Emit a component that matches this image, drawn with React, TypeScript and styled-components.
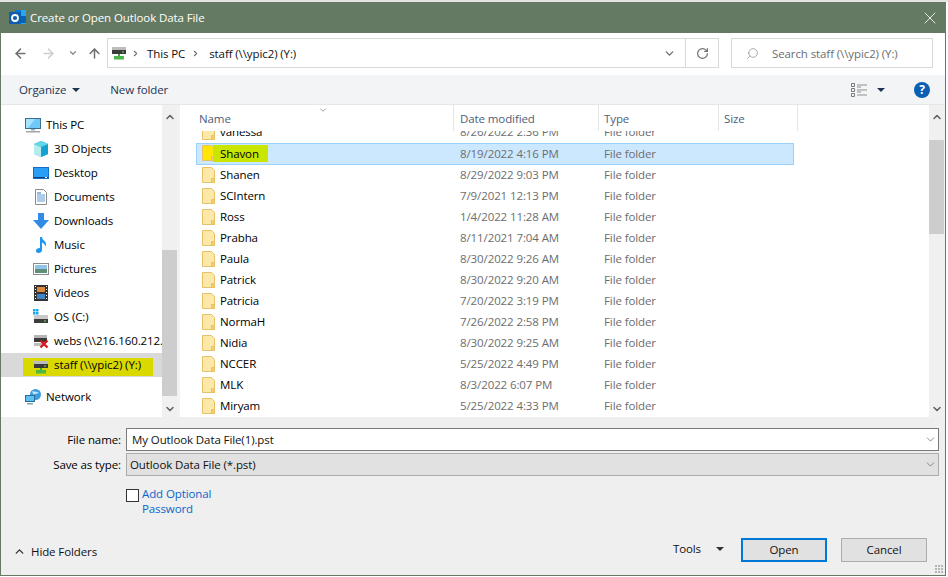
import styled, { createGlobalStyle } from "styled-components";
import { ArrowLeft, ArrowRight, ArrowUp, ChevronDown, ChevronRight, ChevronUp, RotateCw, Search, X } from "lucide-react";

const GlobalStyle = createGlobalStyle`
	html, body {
		margin: 0;
		padding: 0;
		background: #fff;
		font-family: "Open Sans", "Noto Sans", sans-serif;
		font-size: 11.5px;
		letter-spacing: -0.1px;
		color: #000;
		overflow: hidden;
	}
`;

const Page = styled.div`
	width: 948px;
	height: 577px;
	padding: 2px 2px 1px 0;
	box-sizing: border-box;
	background: linear-gradient(#e4e4e4 2px, #fff 2px);
`;

const Dialog = styled.div`
	width: 946px;
	height: 574px;
	box-sizing: border-box;
	border: 1px solid #647a62;
	border-top: 0;
	display: flex;
	flex-direction: column;
	background: #f0f0f0;
`;

const TitleBar = styled.div`
	height: 31px;
	flex: none;
	background: #647a62;
	color: #fff;
	display: flex;
	align-items: center;
	padding-left: 8px;
	gap: 3px;
`;

const CloseButton = styled.div`
	margin-left: auto;
	width: 30px;
	display: flex;
	justify-content: center;
	color: #fff;
`;

const NavBar = styled.div`
	height: 42px;
	flex: none;
	box-sizing: border-box;
	background: #fff;
	display: flex;
	align-items: center;
	padding: 0 10px 2px 7px;
`;

const NavButton = styled.div<{ $width: number; $color: string }>`
	width: ${(p) => p.$width}px;
	display: flex;
	justify-content: center;
	color: ${(p) => p.$color};
`;

const AddressBox = styled.div`
	width: 612px;
	height: 30px;
	box-sizing: border-box;
	border: 1px solid #d9d9d9;
	display: flex;
	align-items: center;
	padding-left: 3px;
	color: #111;
`;

const Crumb = styled.span<{ $left: number; $right: number }>`
	display: flex;
	margin: 0 ${(p) => p.$right}px 0 ${(p) => p.$left}px;
`;

const AddressEnd = styled.div`
	margin-left: auto;
	height: 100%;
	display: flex;
	align-items: center;
	color: #6f6f6f;
`;

const RefreshBox = styled.div`
	width: 32px;
	height: 100%;
	margin-left: 9px;
	border-left: 1px solid #d9d9d9;
	display: flex;
	align-items: center;
	justify-content: center;
`;

const SearchBox = styled.div`
	margin-left: 12px;
	width: 202px;
	height: 30px;
	box-sizing: border-box;
	border: 1px solid #d9d9d9;
	display: flex;
	align-items: center;
	padding-left: 14px;
	gap: 13px;
	color: #6d6d6d;
`;

const SearchGlyph = styled(Search)`
	transform: scaleX(-1);
	color: #8a7a86;
`;

const Toolbar = styled.div`
	height: 30px;
	flex: none;
	background: #f3f4f6;
	border-bottom: 1px solid #e6e6e6;
	box-sizing: border-box;
	display: flex;
	align-items: center;
	padding-left: 18px;
	color: #1c3553;
`;

const Caret = styled.span<{ $color?: string }>`
	display: inline-block;
	width: 0;
	height: 0;
	border-left: 4px solid transparent;
	border-right: 4px solid transparent;
	border-top: 4px solid ${(p) => p.$color ?? "#1c3553"};
`;

const OrganizeMenu = styled.div`
	display: flex;
	align-items: center;
	gap: 6px;
`;

const NewFolder = styled.div`
	margin-left: 30px;
`;

const ToolbarRight = styled.div`
	margin-left: auto;
	display: flex;
	align-items: center;
	gap: 10px;
`;

const HelpBadge = styled.div`
	width: 16px;
	height: 16px;
	border-radius: 50%;
	background: #0a5fb4;
	color: #fff;
	font-weight: 700;
	font-size: 12px;
	line-height: 16px;
	text-align: center;
	margin: 0 15px 0 19px;
`;

const Browser = styled.div`
	height: 312px;
	flex: none;
	display: flex;
	background: #fff;
`;

const Sidebar = styled.div`
	width: 161px;
	flex: none;
	padding-top: 8px;
	box-sizing: border-box;
	overflow: hidden;
`;

const NavItem = styled.div<{ $indent: number; $selected?: boolean; $gapAbove?: number }>`
	height: 24px;
	box-sizing: border-box;
	margin-top: ${(p) => p.$gapAbove ?? 0}px;
	display: flex;
	align-items: center;
	padding: 0 0 1px ${(p) => p.$indent}px;
	gap: 5px;
	white-space: nowrap;
	background: ${(p) => (p.$selected ? "#d9d9d9" : "transparent")};

	svg {
		flex: none;
	}
`;

const Marker = styled.span`
	display: inline-flex;
	align-items: center;
	align-self: flex-start;
	gap: 5px;
	height: 18px;
	box-sizing: border-box;
	margin-top: 5px;
	margin-left: -10px;
	padding: 0 12px 6px 10px;
	background: #d9d900;

	svg {
		margin-top: 5px;
	}
`;

const ScrollBar = styled.div<{ $edge: number }>`
	width: 15px;
	flex: none;
	background: #f0f0f0;
	border-right: ${(p) => p.$edge}px solid #f2f2f2;
	padding-top: 4px;
	display: flex;
	flex-direction: column;
	align-items: center;
	color: #5f5f5f;
`;

const ScrollArrow = styled.div`
	height: 16px;
	flex: none;
	display: flex;
	align-items: center;
	justify-content: center;
`;

const ScrollGap = styled.div<{ $height: number }>`
	height: ${(p) => p.$height}px;
	flex: none;
`;

const ScrollThumb = styled.div<{ $height: number }>`
	width: 100%;
	height: ${(p) => p.$height}px;
	flex: none;
	background: #cdcdcd;
`;

const FileArea = styled.div`
	flex: 1;
	min-width: 0;
	overflow: hidden;
	position: relative;
	padding-left: 16px;
`;

const SortMark = styled.div`
	position: absolute;
	z-index: 2;
	left: 138px;
	top: -2px;
	color: #8f8f8f;
`;

const HeaderRow = styled.div`
	height: 26px;
	position: relative;
	z-index: 1;
	background: #fff;
	display: grid;
	grid-template-columns: 258px 145px 120px 79px;
	color: #4c607a;
`;

const HeaderCell = styled.div<{ $pad: number }>`
	border-right: 1px solid #e5e5e5;
	display: flex;
	align-items: center;
	padding-left: ${(p) => p.$pad}px;
`;

const Rows = styled.div`
	margin-top: -9px;
`;

const Row = styled.div<{ $selected?: boolean }>`
	height: ${(p) => (p.$selected ? 22 : 21)}px;
	width: 598px;
	box-sizing: border-box;
	padding-bottom: 2px;
	display: grid;
	grid-template-columns: ${(p) => (p.$selected ? 23 : 24)}px 240px 144px 1fr;
	align-items: center;
	color: #6d6d6d;
	background: ${(p) => (p.$selected ? "#cce8ff" : "transparent")};
	border: ${(p) => (p.$selected ? "1px solid #99d1ff" : "0")};
`;

const FolderCell = styled.div`
	display: flex;
	padding-left: 6px;
`;

const SelectedFolderCell = styled(FolderCell)`
	padding-left: 5px;
`;

const NameCell = styled.div`
	color: #000;
`;

const NameMark = styled.span`
	background: #c9e600;
	margin-left: -7px;
	padding: 1px 9px 1px 7px;
`;

const Footer = styled.div`
	flex: 1;
	background: #efefef;
	display: flex;
	flex-direction: column;
	padding: 11px 6px 0 0;
`;

const FieldRow = styled.div`
	display: flex;
	align-items: center;
	height: 23px;
	margin-bottom: 2px;
`;

const FieldLabel = styled.div`
	width: 120px;
	text-align: right;
	margin-right: 5px;
	flex: none;
`;

const FieldInput = styled.div<{ $select?: boolean }>`
	flex: 1;
	height: 23px;
	box-sizing: border-box;
	border: 1px solid ${(p) => (p.$select ? "#acacac" : "#7a7a7a")};
	background: ${(p) => (p.$select ? "#e1e1e1" : "#fff")};
	display: flex;
	align-items: center;
	padding-left: ${(p) => (p.$select ? 3 : 5)}px;
	color: #111;
`;

const FieldCaret = styled.div`
	margin-left: auto;
	margin-right: 1px;
	display: flex;
	color: #555;
`;

const OptionRow = styled.div`
	display: flex;
	margin: 6px 0 0 125px;
`;

const CheckBox = styled.div`
	width: 13px;
	height: 13px;
	box-sizing: border-box;
	border: 1px solid #333;
	background: #fff;
	margin: 5px 3px 0 0;
`;

const OptionLink = styled.div`
	width: 90px;
	color: #0a66cc;
	line-height: 15px;
	padding-top: 2px;
`;

const FooterBottom = styled.div`
	margin-top: auto;
	height: 53px;
	display: flex;
	align-items: flex-start;
	position: relative;
`;

const HideFolders = styled.div`
	display: flex;
	align-items: center;
	gap: 5px;
	padding: 22px 0 0 12px;
	color: #333;
`;

const HideLabel = styled.span`
	color: #111;
`;

const ToolsMenu = styled.div`
	margin-left: auto;
	display: flex;
	align-items: center;
	gap: 15px;
	padding-top: 19px;
	margin-right: 17px;
	color: #111;
`;

const Button = styled.div<{ $primary?: boolean }>`
	width: 86px;
	height: 24px;
	box-sizing: border-box;
	margin-right: ${(p) => (p.$primary ? 14 : 12)}px;
	margin-top: 16px;
	padding-bottom: 2px;
	background: #e1e1e1;
	border: ${(p) => (p.$primary ? "2px solid #0078d7" : "1px solid #adadad")};
	display: flex;
	align-items: center;
	justify-content: center;
	color: #111;
`;

const Grip = styled.div`
	position: absolute;
	right: -5px;
	bottom: 1px;
	width: 9px;
	height: 9px;
	background: radial-gradient(circle at 1px 1px, #b5b5b5 1px, transparent 1px) 0 0 / 3px 3px;
`;

const OutlookIcon = () => (
	<svg width="18" height="18" viewBox="0 0 18 18">
		<rect x="6" y="1" width="11" height="14" fill="#28a8ea" />
		<rect x="6" y="1" width="6" height="6" fill="#0078d4" />
		<rect x="11" y="7" width="6" height="7" fill="#0364b8" />
		<rect x="0" y="3" width="12" height="12" rx="1" fill="#0f5cb0" />
		<circle cx="6" cy="9" r="3" fill="none" stroke="#fff" strokeWidth="1.8" />
	</svg>
);

const NetDrive = () => (
	<svg width="16" height="16" viewBox="0 0 16 16">
		<rect x="1" y="2" width="14" height="3" fill="#bcbcbc" />
		<rect x="1" y="5" width="14" height="4" fill="#3a3a3a" />
		<rect x="11" y="6.500" width="2" height="1" fill="#6fe05a" />
		<rect x="7" y="9" width="2" height="3" fill="#3fa83a" />
		<rect x="3" y="11" width="10" height="3.500" fill="#4cb848" />
	</svg>
);

const FolderIcon = ({ tint = "#fce8a8" }: { tint?: string }) => (
	<svg width="13" height="16" viewBox="0 0 13 16">
		<path d="M.5.500h9l3 3v12H.5z" fill={tint} stroke="#e8c166" />
		<path d="M9.500 11.500h3v4h-3z" fill="#f3cf74" stroke="#e8c166" />
	</svg>
);

const MonitorIcon = () => (
	<svg width="16" height="16" viewBox="0 0 16 16">
		<rect x=".5" y="1.500" width="15" height="10" fill="#6fc8f7" stroke="#3c6e8f" />
		<path d="M1 2h9L3 11H1z" fill="#a6e3ff" />
		<rect x="6" y="12" width="4" height="1.500" fill="#a0a8ae" />
		<rect x="1" y="14" width="14" height="1.500" fill="#a0a8ae" />
	</svg>
);

const CubeIcon = () => (
	<svg width="16" height="16" viewBox="0 0 16 16">
		<path d="M8 0l7 3v10l-7 3-7-3V3z" fill="#27b3d6" />
		<path d="M1 3l7 3v10l-7-3z" fill="#b5ecee" />
		<path d="M8 6l7-3v10l-7 3z" fill="#15a0cf" />
		<path d="M8 0l7 3-7 3-7-3z" fill="#63d6e4" />
	</svg>
);

const DesktopIcon = () => (
	<svg width="16" height="16" viewBox="0 0 16 16">
		<rect x="0" y="2" width="16" height="12" fill="#0f6fc6" />
		<rect x="1" y="3" width="14" height="9" fill="#2a9df4" />
		<rect x="1" y="12" width="14" height="1" fill="#0b3f75" />
		<rect x="12" y="12" width="2" height="1" fill="#fff" />
	</svg>
);

const DocumentIcon = () => (
	<svg width="16" height="16" viewBox="0 0 16 16">
		<path d="M2.500.500h8l3 3v12h-11z" fill="#fff" stroke="#8a8a8a" />
		<path d="M4 6h8M4 8h8M4 10h8M4 12h8" stroke="#5b9bd5" />
		<path d="M4 4h4" stroke="#2f6fb5" />
	</svg>
);

const DownloadIcon = () => (
	<svg width="16" height="16" viewBox="0 0 16 16">
		<path d="M5 0h6v7h5l-8 9-8-9h5z" fill="#2f8be6" />
	</svg>
);

const MusicIcon = () => (
	<svg width="16" height="16" viewBox="0 0 16 16">
		<path d="M7 0h2c0 3 4 4 4 7 0 1-.5 2-1 2.500.2-2-1.500-3.500-3-4V13c0 1.800-1.500 3-3.500 3S3 14.800 3 13.500 4.500 11 7 11z" fill="#1e96ee" />
	</svg>
);

const PicturesIcon = () => (
	<svg width="16" height="16" viewBox="0 0 16 16">
		<rect x=".5" y="2.500" width="15" height="11" fill="#fff" stroke="#8c8c8c" />
		<rect x="2" y="4" width="12" height="4" fill="#8fc3e8" />
		<rect x="2" y="8" width="12" height="4" fill="#5f8f78" />
	</svg>
);

const VideosIcon = () => (
	<svg width="16" height="16" viewBox="0 0 16 16">
		<rect x="1" y="0" width="14" height="16" fill="#333" />
		<rect x="4" y="2" width="8" height="5" fill="#d98a3a" />
		<rect x="4" y="9" width="8" height="5" fill="#3f86c6" />
		<path d="M2 1.500h1M2 4.500h1M2 7.500h1M2 10.500h1M2 13.500h1M13 1.500h1M13 4.500h1M13 7.500h1M13 10.500h1M13 13.500h1" stroke="#fff" />
	</svg>
);

const SystemDriveIcon = () => (
	<svg width="16" height="16" viewBox="0 0 16 16">
		<path d="M0 0h2.500v2.500H0zM3 0h2.500v2.500H3zM0 3h2.500v2.500H0zM3 3h2.500v2.500H3z" fill="#19a4ee" />
		<rect x="1" y="6" width="14" height="4" fill="#c9c9c9" />
		<rect x="1" y="10" width="14" height="4" fill="#3c3c3c" />
		<rect x="11" y="11.500" width="2" height="1" fill="#7be06a" />
	</svg>
);

const BrokenDriveIcon = () => (
	<svg width="16" height="16" viewBox="0 0 16 16">
		<rect x="1" y="2" width="13" height="3" fill="#b5b5b5" />
		<rect x="1" y="5" width="13" height="4" fill="#3a3a3a" />
		<rect x="1" y="10" width="9" height="3" fill="#bdbdbd" />
		<path d="M7.500 7.500l7 7M14.500 7.500l-7 7" stroke="#d8151b" strokeWidth="2.200" />
	</svg>
);

const NetworkIcon = () => (
	<svg width="16" height="16" viewBox="0 0 16 16">
		<circle cx="10.500" cy="5.500" r="5.500" fill="#3f9bdc" />
		<path d="M7 2c2 1 5 0 7 2-2 0-4 2-6 1z" fill="#bfe6fa" />
		<rect x=".5" y="6.500" width="9" height="6" fill="#5ec0f2" stroke="#2a6f9c" />
		<rect x="2" y="14" width="6" height="1.500" fill="#8aa0ae" />
	</svg>
);

const ViewsIcon = () => (
	<svg width="16" height="14" viewBox="0 0 16 14">
		<path d="M.5.500h3v3h-3zM.5 5.500h3v3h-3zM.5 10.500h3v3h-3z" fill="none" stroke="#7a7a7a" />
		<path d="M6 2h10M6 7h10M6 12h10M6 4h4M6 9h4" stroke="#8f8f8f" />
	</svg>
);

const files = [
	{ name: "vanessa", date: "8/26/2022 2:36 PM" },
	{ name: "Shavon", date: "8/19/2022 4:16 PM", selected: true },
	{ name: "Shanen", date: "8/29/2022 9:03 PM" },
	{ name: "SCIntern", date: "7/9/2021 12:13 PM" },
	{ name: "Ross", date: "1/4/2022 11:28 AM" },
	{ name: "Prabha", date: "8/11/2021 7:04 AM" },
	{ name: "Paula", date: "8/30/2022 9:26 AM" },
	{ name: "Patrick", date: "8/30/2022 9:20 AM" },
	{ name: "Patricia", date: "7/20/2022 3:19 PM" },
	{ name: "NormaH", date: "7/26/2022 2:58 PM" },
	{ name: "Nidia", date: "8/30/2022 9:25 AM" },
	{ name: "NCCER", date: "5/25/2022 4:49 PM" },
	{ name: "MLK", date: "8/3/2022 6:07 PM" },
	{ name: "Miryam", date: "5/25/2022 4:33 PM" },
];

const places = [
	{ label: "3D Objects", icon: <CubeIcon /> },
	{ label: "Desktop", icon: <DesktopIcon /> },
	{ label: "Documents", icon: <DocumentIcon /> },
	{ label: "Downloads", icon: <DownloadIcon /> },
	{ label: "Music", icon: <MusicIcon /> },
	{ label: "Pictures", icon: <PicturesIcon /> },
	{ label: "Videos", icon: <VideosIcon /> },
	{ label: "OS (C:)", icon: <SystemDriveIcon /> },
	{ label: "webs (\\\\216.160.212.", icon: <BrokenDriveIcon /> },
];

export default function App() {
	return (
		<Page>
			<GlobalStyle />
			<Dialog>
				<TitleBar>
					<OutlookIcon />
					Create or Open Outlook Data File
					<CloseButton>
						<X size={20} strokeWidth={1} />
					</CloseButton>
				</TitleBar>
				<NavBar>
					<NavButton $width={24} $color="#6f6f6f"><ArrowLeft size={15} strokeWidth={2.4} /></NavButton>
					<NavButton $width={33} $color="#cfcfcf"><ArrowRight size={15} strokeWidth={2.4} /></NavButton>
					<NavButton $width={16} $color="#8a8a8a"><ChevronDown size={10} strokeWidth={3} /></NavButton>
					<NavButton $width={26} $color="#6f6f6f"><ArrowUp size={15} strokeWidth={2.4} /></NavButton>
					<AddressBox>
						<NetDrive />
						<Crumb $left={4} $right={7}><ChevronRight size={9} strokeWidth={3} color="#6f6f6f" /></Crumb>
						This PC
						<Crumb $left={6} $right={9}><ChevronRight size={9} strokeWidth={3} color="#6f6f6f" /></Crumb>
						staff (\\ypic2) (Y:)
						<AddressEnd>
							<ChevronDown size={13} strokeWidth={2.5} />
							<RefreshBox><RotateCw size={13} strokeWidth={2.2} /></RefreshBox>
						</AddressEnd>
					</AddressBox>
					<SearchBox>
						<SearchGlyph size={13} strokeWidth={1.2} />
						Search staff (\\ypic2) (Y:)
					</SearchBox>
				</NavBar>
				<Toolbar>
					<OrganizeMenu>Organize <Caret /></OrganizeMenu>
					<NewFolder>New folder</NewFolder>
					<ToolbarRight>
						<ViewsIcon />
						<Caret />
						<HelpBadge>?</HelpBadge>
					</ToolbarRight>
				</Toolbar>
				<Browser>
					<Sidebar>
						<NavItem $indent={24}><MonitorIcon />This PC</NavItem>
						{places.map((place) => (
							<NavItem key={place.label} $indent={32}>{place.icon}{place.label}</NavItem>
						))}
						<NavItem $indent={32} $selected>
							<Marker><NetDrive />staff (\\ypic2) (Y:)</Marker>
						</NavItem>
						<NavItem $indent={24} $gapAbove={8}><NetworkIcon />Network</NavItem>
					</Sidebar>
					<ScrollBar $edge={3}>
						<ScrollArrow><ChevronUp size={12} strokeWidth={3} /></ScrollArrow>
						<ScrollGap $height={125} />
						<ScrollThumb $height={146} />
						<ScrollGap $height={5} />
						<ScrollArrow><ChevronDown size={12} strokeWidth={3} /></ScrollArrow>
					</ScrollBar>
					<FileArea>
						<SortMark><ChevronDown size={10} /></SortMark>
						<HeaderRow>
							<HeaderCell $pad={3}>Name</HeaderCell>
							<HeaderCell $pad={6}>Date modified</HeaderCell>
							<HeaderCell $pad={5}>Type</HeaderCell>
							<HeaderCell $pad={5}>Size</HeaderCell>
						</HeaderRow>
						<Rows>
							{files.map((file) => (
								<Row key={file.name} $selected={file.selected}>
									{file.selected ? (
										<SelectedFolderCell><FolderIcon tint="#ffe600" /></SelectedFolderCell>
									) : (
										<FolderCell><FolderIcon /></FolderCell>
									)}
									<NameCell>{file.selected ? <NameMark>{file.name}</NameMark> : file.name}</NameCell>
									<div>{file.date}</div>
									<div>File folder</div>
								</Row>
							))}
						</Rows>
					</FileArea>
					<ScrollBar $edge={1}>
						<ScrollArrow><ChevronUp size={12} strokeWidth={3} /></ScrollArrow>
						<ScrollGap $height={15} />
						<ScrollThumb $height={94} />
						<ScrollGap $height={167} />
						<ScrollArrow><ChevronDown size={12} strokeWidth={3} /></ScrollArrow>
					</ScrollBar>
				</Browser>
				<Footer>
					<FieldRow>
						<FieldLabel>File name:</FieldLabel>
						<FieldInput>
							My Outlook Data File(1).pst
							<FieldCaret><ChevronDown size={13} strokeWidth={1.2} /></FieldCaret>
						</FieldInput>
					</FieldRow>
					<FieldRow>
						<FieldLabel>Save as type:</FieldLabel>
						<FieldInput $select>
							Outlook Data File (*.pst)
							<FieldCaret><ChevronDown size={13} strokeWidth={1.2} /></FieldCaret>
						</FieldInput>
					</FieldRow>
					<OptionRow>
						<CheckBox />
						<OptionLink>Add Optional Password</OptionLink>
					</OptionRow>
					<FooterBottom>
						<HideFolders>
							<ChevronUp size={13} strokeWidth={2.5} />
							<HideLabel>Hide Folders</HideLabel>
						</HideFolders>
						<ToolsMenu>Tools <Caret $color="#333" /></ToolsMenu>
						<Button $primary>Open</Button>
						<Button>Cancel</Button>
						<Grip />
					</FooterBottom>
				</Footer>
			</Dialog>
		</Page>
	);
}
